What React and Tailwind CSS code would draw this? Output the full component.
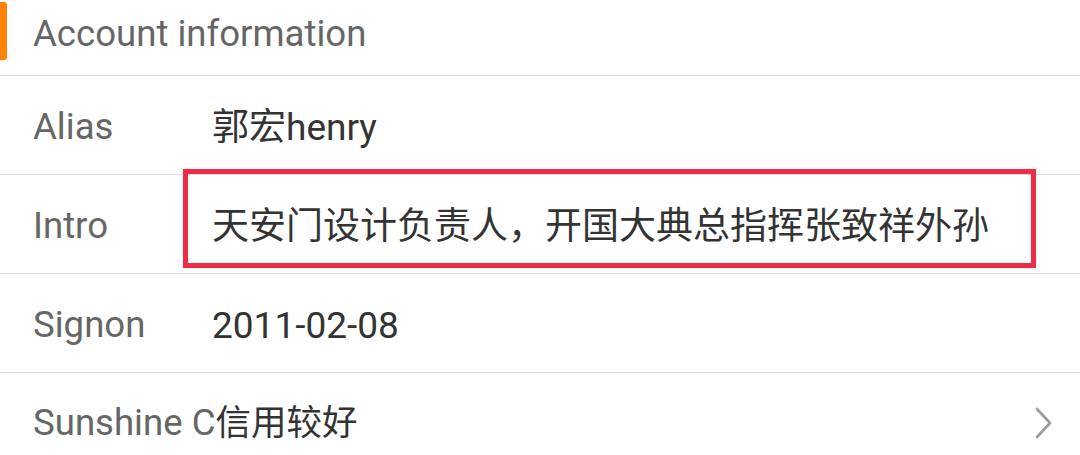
const rows = [
  { label: "Alias", value: "郭宏henry" },
  { label: "Intro", value: "天安门设计负责人，开国大典总指挥张致祥外孙", boxed: true },
  { label: "Signon", value: "2011-02-08" },
];

function Chevron() {
  return (
    <svg width="20" height="32" viewBox="0 0 20 32" fill="none">
      <path d="M3 2 L16 16 L3 30" stroke="#9a9a9a" strokeWidth="2.6" strokeLinecap="round" strokeLinejoin="round" />
    </svg>
  );
}

export default function App() {
  return (
    <div className="w-[1080px] h-[455px] overflow-hidden bg-white font-['Roboto','Noto_Sans_CJK_SC',sans-serif] text-[36.6px]">
      {/* Section header */}
      <div className="relative h-[76px] border-b border-[#e0e0e0] flex items-start pl-[33px] pt-[13px]">
        <div className="absolute left-0 top-[2px] w-[7px] h-[58px] rounded-r-[3px] bg-[#ff8200]" />
        <span className="text-[#666666] leading-[42px]">Account information</span>
      </div>

      {rows.map((r) => (
        <div key={r.label} className="relative h-[99px] border-b border-[#e0e0e0] flex items-center pl-[33px] pt-[5px]">
          <span className="w-[179px] text-[#666666]">{r.label}</span>
          <span className="text-[#333333] text-[37px]">{r.value}</span>
          {r.boxed && (
            <div className="absolute left-[183px] top-[-6px] w-[853px] h-[99px] border-[5px] border-[#ee2a45]" />
          )}
        </div>
      ))}

      <div className="h-[82px] flex items-center justify-between pl-[33px] pr-[26px] pt-[18px]">
        <span className="text-[#666666]">
          Sunshine C<span className="text-[#333333] text-[35.5px]">信用较好</span>
        </span>
        <Chevron />
      </div>
    </div>
  );
}
